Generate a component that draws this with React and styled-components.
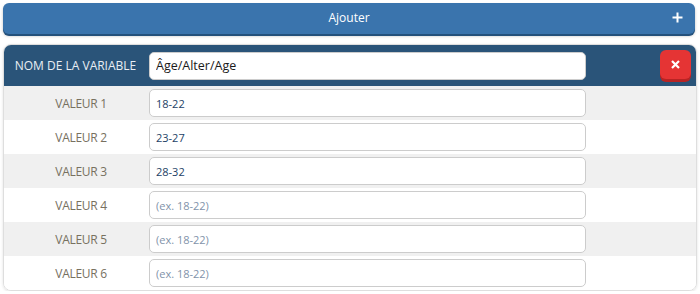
import styled, { createGlobalStyle } from "styled-components";

const GlobalStyle = createGlobalStyle`
  body {
    margin: 0;
    background: #ffffff;
    font-family: "Open Sans", "DejaVu Sans", sans-serif;
  }
`;

const values = ["18-22", "23-27", "28-32", "", "", ""];

const Page = styled.div`
  padding: 3px 5px 0 3px;
  display: flex;
  flex-direction: column;
  gap: 10px;
`;

const AddButton = styled.button`
  position: relative;
  height: 31px;
  border: none;
  border-radius: 6px;
  background: #3a74ad;
  box-shadow: 0 2px 0 #24517c, 0 2px 3px rgba(0, 0, 0, 0.25);
  color: #ffffff;
  font-family: inherit;
  font-size: 12px;
  display: flex;
  align-items: center;
  justify-content: center;
  padding: 0 0 2px;
`;

const PlusIcon = styled.svg`
  position: absolute;
  right: 12px;
  top: 9px;
`;

const Panel = styled.div`
  border: 1px solid #dedede;
  border-radius: 8px;
  overflow: hidden;
  box-shadow: 0 1px 3px rgba(0, 0, 0, 0.12);
  margin-right: -2px;
`;

const HeaderRow = styled.div`
  display: grid;
  grid-template-columns: 145px 437px 1fr;
  align-items: center;
  height: 41px;
  background: #2a5479;
`;

const Row = styled.div`
  display: grid;
  grid-template-columns: 145px 437px 1fr;
  align-items: center;
  height: 34px;
  background: ${(p) => (p.$shaded ? "#f0f0f0" : "#ffffff")};
`;

const Label = styled.div`
  text-align: center;
  font-size: 12px;
  letter-spacing: ${(p) => (p.$light ? "0" : "-0.3px")};
  color: ${(p) => (p.$light ? "#e8eef4" : "#77705f")};
  padding: ${(p) => (p.$light ? "0 2px 0 0" : "0 0 0 9px")};
`;

const Field = styled.input`
  box-sizing: border-box;
  width: 100%;
  height: 28px;
  border: 1px solid #cccccc;
  border-radius: 5px;
  background: #ffffff;
  padding: 0 6px;
  font-family: inherit;
  font-size: ${(p) => (p.$dark ? "12.5px" : "11px")};
  color: ${(p) => (p.$dark ? "#1a1a1a" : "#1d3f66")};
  outline: none;
  &::placeholder {
    color: #7f93aa;
  }
`;

const DeleteButton = styled.button`
  justify-self: end;
  margin-right: 5px;
  margin-top: -3px;
  width: 31px;
  height: 29px;
  border: none;
  border-radius: 6px;
  background: #e53434;
  box-shadow: 0 3px 0 #b82424;
  display: flex;
  align-items: center;
  justify-content: center;
  padding: 0;
`;

export default function App() {
  return (
    <>
      <GlobalStyle />
      <Page>
        <AddButton>
          Ajouter
          <PlusIcon width="11" height="11" viewBox="0 0 11 11">
            <path d="M5.5 0.5v10M0.5 5.5h10" stroke="#fff" strokeWidth="2" />
          </PlusIcon>
        </AddButton>
        <Panel>
          <HeaderRow>
            <Label $light>NOM DE LA VARIABLE</Label>
            <Field $dark defaultValue="Âge/Alter/Age" />
            <DeleteButton>
              <svg width="9" height="9" viewBox="0 0 9 9">
                <path d="M1 1l7 7M8 1l-7 7" stroke="#fff" strokeWidth="2.2" />
              </svg>
            </DeleteButton>
          </HeaderRow>
          {values.map((v, i) => (
            <Row key={i} $shaded={i % 2 === 0}>
              <Label>VALEUR {i + 1}</Label>
              <Field defaultValue={v} placeholder="(ex. 18-22)" />
            </Row>
          ))}
        </Panel>
      </Page>
    </>
  );
}
